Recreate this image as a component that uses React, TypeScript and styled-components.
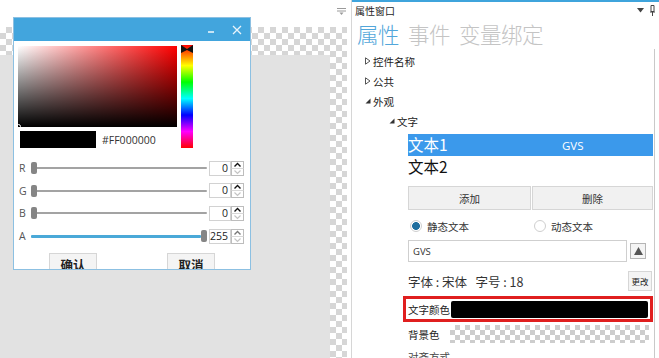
import React from "react";
import styled, { createGlobalStyle, css } from "styled-components";

const GlobalStyle = createGlobalStyle`
  html, body { margin: 0; padding: 0; background: #fff; }
  body { font-family: "Noto Sans CJK SC", "Noto Sans", sans-serif; color: #222; }
  * { box-sizing: border-box; }
`;

const checker = (sq: number, c: string) => css`
  background-color: #fff;
  background-image:
    linear-gradient(45deg, ${c} 25%, transparent 25%, transparent 75%, ${c} 75%),
    linear-gradient(45deg, ${c} 25%, transparent 25%, transparent 75%, ${c} 75%);
  background-size: ${sq * 2}px ${sq * 2}px;
  background-position: 0 0, ${sq}px ${sq}px;
`;

const Frame = styled.div`
  width: 659px;
  height: 358px;
  display: flex;
  overflow: hidden;
  background: #fff;
`;

/* ---------- design canvas ---------- */
const CanvasPane = styled.div`
  position: relative;
  width: 352px;
  flex: none;
  display: flex;
  flex-direction: column;
  border-right: 1px solid #d6d6d6;
`;

const CanvasTop = styled.div`
  height: 27px;
  flex: none;
  display: flex;
  justify-content: flex-end;
  padding: 7px 5px 0 0;
`;

const Surface = styled.div`
  flex: 1;
  margin-right: 4px;
  display: flex;
  flex-direction: column;
  padding: 28px 17px 0 0;
  ${checker(6, "#d6d6d6")}
`;

const SurfaceGray = styled.div`
  flex: 1;
  background: #e2e2e2;
`;

/* ---------- color dialog ---------- */
const Dialog = styled.div`
  position: absolute;
  left: 13px;
  top: 17px;
  width: 238px;
  height: 253px;
  border: 1px solid #8cc0e2;
  background: #fff;
  overflow: hidden;
  display: flex;
  flex-direction: column;
`;

const TitleBar = styled.div`
  height: 23px;
  flex: none;
  background: #42a5dd;
  display: flex;
  justify-content: flex-end;
  align-items: center;
  padding-right: 4px;
  gap: 8px;
`;

const TitleBtn = styled.div`
  width: 18px;
  height: 18px;
  display: flex;
  align-items: center;
  justify-content: center;
`;

const DialogBody = styled.div`
  flex: 1;
  padding: 5px 6px 0 4px;
  display: flex;
  flex-direction: column;
`;

const ColorTop = styled.div`
  display: flex;
  gap: 4px;
  align-items: flex-start;
`;

const LeftCol = styled.div`
  display: flex;
  flex-direction: column;
  gap: 4px;
`;

const SvSquare = styled.div`
  position: relative;
  width: 159px;
  height: 81px;
  background: linear-gradient(to top, #000, rgba(0, 0, 0, 0)),
    linear-gradient(to right, #fff, #f00);
`;

const SvMarker = styled.div`
  position: absolute;
  left: -2px;
  bottom: -2px;
  width: 5px;
  height: 5px;
  border: 1px solid #fff;
  border-radius: 50%;
`;

const SwatchRow = styled.div`
  display: flex;
  align-items: center;
  padding-left: 2px;
`;

const Swatch = styled.div`
  width: 76px;
  height: 17px;
  background: #000;
`;

const HexText = styled.span`
  margin-left: 6px;
  font-family: "Open Sans", "Noto Sans", sans-serif;
  font-size: 10.5px;
  color: #333;
`;

const HueBar = styled.div`
  position: relative;
  width: 12px;
  height: 103px;
  margin-top: -1px;
  background: linear-gradient(
    to bottom,
    #f00 0%,
    #ff0 20%,
    #0f0 36%,
    #0ff 52%,
    #00f 68%,
    #f0f 84%,
    #f00 100%
  );
`;

const HueMarker = styled.svg`
  position: absolute;
  left: 0;
  top: 0;
`;

const SliderList = styled.div`
  margin-top: 9px;
  display: flex;
  flex-direction: column;
`;

const SliderRow = styled.div`
  height: 22.6px;
  display: flex;
  align-items: center;
`;

const ChanLabel = styled.span`
  width: 12px;
  margin-left: 1px;
  font-family: "Open Sans", "Noto Sans", sans-serif;
  font-size: 10.5px;
  color: #555;
`;

const Track = styled.div<{ $full?: boolean }>`
  position: relative;
  flex: 1;
  height: 14px;
  display: flex;
  align-items: center;
  &::before {
    content: "";
    position: absolute;
    left: ${(p) => (p.$full ? "0" : "5px")};
    right: ${(p) => (p.$full ? "6px" : "0")};
    height: ${(p) => (p.$full ? "3px" : "2px")};
    background: ${(p) => (p.$full ? "#4aa9d8" : "#a3a3a3")};
    border-radius: 1px;
  }
`;

const Thumb = styled.div<{ $end?: boolean }>`
  position: absolute;
  ${(p) => (p.$end ? "right: 0;" : "left: 0;")}
  width: 6px;
  height: 12px;
  border-radius: 2px;
  background: #858585;
`;

const NumBox = styled.div`
  width: 22px;
  height: 15px;
  margin-left: 2px;
  border: 1px solid #d2d2d2;
  font-family: "Open Sans", "Noto Sans", sans-serif;
  font-size: 10.5px;
  line-height: 13px;
  text-align: right;
  padding-right: 2px;
  color: #222;
`;

const Spinner = styled.svg`
  flex: none;
`;

const DlgButtons = styled.div`
  margin-top: 6px;
  display: flex;
  justify-content: space-around;
  margin-left: -4px;
  margin-right: -6px;
`;

const DlgButton = styled.div`
  width: 48px;
  height: 22px;
  border: 1px solid #d6d6d6;
  background: #f4f4f4;
  font-size: 12.5px;
  font-weight: 700;
  color: #222;
  display: flex;
  justify-content: center;
  align-items: center;
`;

/* ---------- property panel ---------- */
const PropPanel = styled.div`
  flex: 1;
  display: flex;
  flex-direction: column;
  border-top: 2px solid #3fa4dc;
  min-width: 0;
`;

const PanelHeader = styled.div`
  height: 16px;
  flex: none;
  display: flex;
  align-items: center;
  padding: 0 4px 0 3px;
`;

const PanelTitle = styled.span`
  flex: 1;
  font-size: 10px;
  color: #1e1e1e;
`;

const HeaderIcons = styled.div`
  display: flex;
  align-items: center;
  gap: 6px;
`;

const Tabs = styled.div`
  height: 30px;
  flex: none;
  display: flex;
  align-items: center;
  gap: 9px;
  padding-left: 5px;
`;

const Tab = styled.span<{ $active?: boolean }>`
  font-size: 21.5px;
  font-weight: 300;
  letter-spacing: -0.5px;
  color: ${(p) => (p.$active ? "#52a6da" : "#c4c4c4")};
`;

const PanelBody = styled.div`
  flex: 1;
  display: flex;
  min-height: 0;
`;

const Content = styled.div`
  flex: 1;
  padding-top: 3px;
  display: flex;
  flex-direction: column;
  min-width: 0;
`;

const Rail = styled.div`
  width: 5px;
  flex: none;
  margin-top: 1px;
  border-left: 1px solid #c9c9c9;
`;

const TreeRow = styled.div<{ $level: number }>`
  height: 20px;
  flex: none;
  display: flex;
  align-items: center;
  padding-left: ${(p) => 12 + p.$level * 24}px;
  font-size: 10.5px;
  color: #222;
`;

const Arrow = styled.svg`
  width: 8px;
  flex: none;
  margin-right: 1px;
`;

const Editor = styled.div`
  margin: 3px 1px 0 56px;
  display: flex;
  flex-direction: column;
`;

const ListRow = styled.div<{ $sel?: boolean }>`
  height: 22px;
  display: grid;
  grid-template-columns: 154px 1fr;
  align-items: center;
  background: ${(p) => (p.$sel ? "#3b99eb" : "transparent")};
  color: ${(p) => (p.$sel ? "#fff" : "#111")};
`;

const ListName = styled.span`
  font-size: 15.5px;
  line-height: 1;
`;

const ListValue = styled.span`
  font-family: "Open Sans", "Noto Sans", sans-serif;
  font-size: 11.5px;
`;

const BtnGrid = styled.div`
  margin-top: 8px;
  display: grid;
  grid-template-columns: 123px 1fr;
  gap: 1px;
`;

const FlatButton = styled.div`
  height: 24px;
  border: 1px solid #d6d6d6;
  background: #f1f1f1;
  font-size: 10.5px;
  color: #333;
  display: flex;
  align-items: center;
  justify-content: center;
`;

const RadioGrid = styled.div`
  margin-top: 6px;
  height: 20px;
  display: grid;
  grid-template-columns: 124px 1fr;
  align-items: center;
`;

const RadioItem = styled.div`
  display: flex;
  align-items: center;
  gap: 5px;
  padding-left: 2px;
  font-size: 10.5px;
  color: #333;
`;

const RadioDot = styled.span<{ $on?: boolean }>`
  width: 12px;
  height: 12px;
  border-radius: 50%;
  border: 1px solid #cfcfcf;
  background: ${(p) =>
    p.$on ? "radial-gradient(circle, #1f6e9e 0 3.6px, #fff 4.2px)" : "#fff"};
`;

const InputRow = styled.div`
  margin-top: 4px;
  height: 22px;
  display: flex;
  align-items: center;
`;

const TextInput = styled.div`
  width: 219px;
  height: 22px;
  border: 1px solid #cfcfcf;
  display: flex;
  align-items: center;
  padding-left: 4px;
  font-family: "Open Sans", "Noto Sans", sans-serif;
  font-size: 9.5px;
  color: #333;
`;

const TriButton = styled.div`
  margin-left: 3px;
  width: 16px;
  height: 16px;
  border: 1px solid #b5b5b5;
  background: #f4f4f4;
  display: flex;
  align-items: center;
  justify-content: center;
`;

const FontRow = styled.div`
  margin-top: 8px;
  height: 22px;
  display: flex;
  align-items: center;
  justify-content: space-between;
`;

const FontText = styled.span`
  font-size: 12.5px;
  color: #333;
  white-space: pre;
`;

const SmallButton = styled.div`
  width: 24px;
  height: 20px;
  margin-right: 1px;
  border: 1px solid #d6d6d6;
  background: #f4f4f4;
  font-size: 8.5px;
  color: #222;
  display: flex;
  align-items: center;
  justify-content: center;
`;

const Highlight = styled.div`
  margin: 4px 0 0 -5px;
  height: 26px;
  border: 3px solid #e01f1f;
  display: flex;
  align-items: center;
  padding: 0 2px;
`;

const PropLabel = styled.span<{ $w: number }>`
  width: ${(p) => p.$w}px;
  flex: none;
  font-size: 10.5px;
  color: #222;
`;

const ColorBar = styled.div`
  flex: 1;
  height: 17px;
  border-radius: 2px;
  background: #000;
`;

const BgRow = styled.div`
  margin-top: 3px;
  height: 18px;
  display: flex;
  align-items: center;
  padding-right: 4px;
`;

const CheckerBar = styled.div`
  flex: 1;
  height: 18px;
  ${checker(5, "#cdcdcd")}
`;

const CutRow = styled.div`
  margin-top: 6px;
  padding-left: 0;
  font-size: 10.5px;
  color: #444;
`;

/* ---------- icons ---------- */
const Gripper = () => (
  <svg width="9" height="8" viewBox="0 0 9 8">
    <path d="M0 1.5H9M0 4H9" stroke="#9a9a9a" strokeWidth="1" />
    <path d="M2.5 5.5H6.5L4.5 8Z" fill="#9a9a9a" />
  </svg>
);

const Collapsed = () => (
  <Arrow height="8" viewBox="0 0 8 8">
    <path d="M1.5 0.8L6 4L1.5 7.2Z" fill="none" stroke="#555" strokeWidth="1" />
  </Arrow>
);

const Expanded = () => (
  <Arrow height="8" viewBox="0 0 8 8">
    <path d="M6.5 1.5V6.5H1.5Z" fill="#333" />
  </Arrow>
);

const Spin = ({ active }: { active?: boolean }) => (
  <Spinner width="13" height="15" viewBox="0 0 13 15">
    <rect x="0.5" y="0.5" width="12" height="14" fill="#fff" stroke="#bdbdbd" />
    <line x1="0.5" y1="7.5" x2="12.5" y2="7.5" stroke="#d8d8d8" />
    <path d="M3.5 5.5L6.5 2.5L9.5 5.5" fill="none" stroke={active ? "#111" : "#777"} strokeWidth="1.4" />
    <path d="M3.5 9.5L6.5 12.5L9.5 9.5" fill="none" stroke="#c4c4c4" strokeWidth="1.2" />
  </Spinner>
);

const channels = [
  { k: "R", v: 0 },
  { k: "G", v: 0 },
  { k: "B", v: 0 },
  { k: "A", v: 255 },
];

export default function App() {
  return (
    <>
      <GlobalStyle />
      <Frame>
        <CanvasPane>
          <CanvasTop>
            <Gripper />
          </CanvasTop>
          <Surface>
            <SurfaceGray />
          </Surface>

          <Dialog>
            <TitleBar>
              <TitleBtn>
                <svg width="8" height="8" viewBox="0 0 8 8">
                  <path d="M1 6H7" stroke="#e9f4fb" strokeWidth="1.6" />
                </svg>
              </TitleBtn>
              <TitleBtn>
                <svg width="10" height="10" viewBox="0 0 10 10">
                  <path d="M1 1L9 9M9 1L1 9" stroke="#e9f4fb" strokeWidth="1.3" />
                </svg>
              </TitleBtn>
            </TitleBar>
            <DialogBody>
              <ColorTop>
                <LeftCol>
                  <SvSquare>
                    <SvMarker />
                  </SvSquare>
                  <SwatchRow>
                    <Swatch />
                    <HexText>#FF000000</HexText>
                  </SwatchRow>
                </LeftCol>
                <HueBar>
                  <HueMarker width="12" height="8" viewBox="0 0 12 8">
                    <path d="M0 0L6 4L12 0V8L6 5L0 8Z" fill="#111" />
                  </HueMarker>
                </HueBar>
              </ColorTop>
              <SliderList>
                {channels.map((c) => {
                  const full = c.v === 255;
                  return (
                    <SliderRow key={c.k}>
                      <ChanLabel>{c.k}</ChanLabel>
                      <Track $full={full}>
                        <Thumb $end={full} />
                      </Track>
                      <NumBox>{c.v}</NumBox>
                      <Spin active={!full} />
                    </SliderRow>
                  );
                })}
              </SliderList>
              <DlgButtons>
                <DlgButton>确认</DlgButton>
                <DlgButton>取消</DlgButton>
              </DlgButtons>
            </DialogBody>
          </Dialog>
        </CanvasPane>

        <PropPanel>
          <PanelHeader>
            <PanelTitle>属性窗口</PanelTitle>
            <HeaderIcons>
              <svg width="7" height="5" viewBox="0 0 7 5">
                <path d="M0 0H7L3.5 4.5Z" fill="#444" />
              </svg>
              <svg width="5" height="11" viewBox="0 0 5 11">
                <path d="M1 0.5H4V6.5H1Z" fill="none" stroke="#444" strokeWidth="1" />
                <path d="M0 7H5M2.5 7V11" stroke="#444" strokeWidth="1" />
              </svg>
            </HeaderIcons>
          </PanelHeader>
          <Tabs>
            <Tab $active>属性</Tab>
            <Tab>事件</Tab>
            <Tab>变量绑定</Tab>
          </Tabs>
          <PanelBody>
            <Content>
              <TreeRow $level={0}>
                <Collapsed />
                控件名称
              </TreeRow>
              <TreeRow $level={0}>
                <Collapsed />
                公共
              </TreeRow>
              <TreeRow $level={0}>
                <Expanded />
                外观
              </TreeRow>
              <TreeRow $level={1}>
                <Expanded />
                文字
              </TreeRow>
              <Editor>
                <ListRow $sel>
                  <ListName>文本1</ListName>
                  <ListValue>GVS</ListValue>
                </ListRow>
                <ListRow>
                  <ListName>文本2</ListName>
                  <ListValue />
                </ListRow>
                <BtnGrid>
                  <FlatButton>添加</FlatButton>
                  <FlatButton>删除</FlatButton>
                </BtnGrid>
                <RadioGrid>
                  <RadioItem>
                    <RadioDot $on />
                    静态文本
                  </RadioItem>
                  <RadioItem>
                    <RadioDot />
                    动态文本
                  </RadioItem>
                </RadioGrid>
                <InputRow>
                  <TextInput>GVS</TextInput>
                  <TriButton>
                    <svg width="9" height="8" viewBox="0 0 9 8">
                      <path d="M4.5 0L9 8H0Z" fill="#555" />
                    </svg>
                  </TriButton>
                </InputRow>
                <FontRow>
                  <FontText>{"字体 : 宋体   字号 : 18"}</FontText>
                  <SmallButton>更改</SmallButton>
                </FontRow>
                <Highlight>
                  <PropLabel $w={43}>文字颜色</PropLabel>
                  <ColorBar />
                </Highlight>
                <BgRow>
                  <PropLabel $w={42}>背景色</PropLabel>
                  <CheckerBar />
                </BgRow>
                <CutRow>对齐方式</CutRow>
              </Editor>
            </Content>
            <Rail />
          </PanelBody>
        </PropPanel>
      </Frame>
    </>
  );
}
